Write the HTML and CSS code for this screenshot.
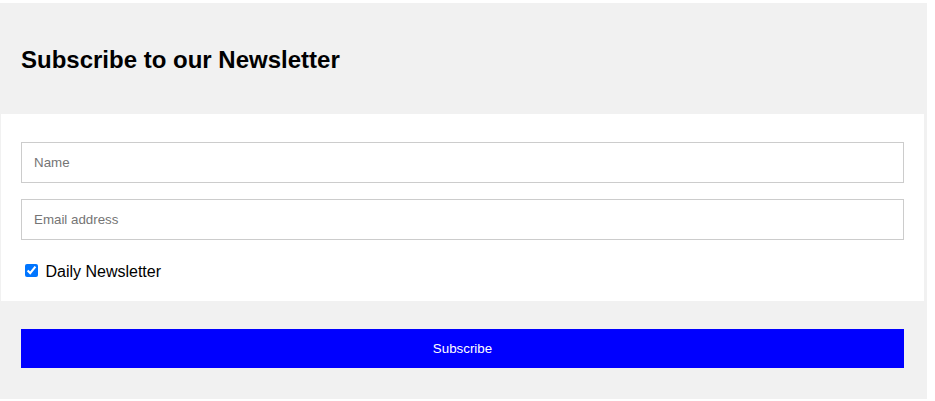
FILE: index.html
```html
<!DOCTYPE html>
<html lang="en">
<head>
    <meta charset="UTF-8">
    <meta name="viewport" content="width=device-width, initial-scale=1.0">
    <title>Newsletter</title>
    <link rel="stylesheet" href="styles.css">
</head>
<body>
    <form class="newsletter" action="#">
        <div class="container">
            <h2>Subscribe to our Newsletter</h2>
        </div>

        <div class="container fields">
            <input type="text" placeholder="Name" name="name">
            <input type="text" placeholder="Email address" name="mail">
            <label>
                <input type="checkbox" checked="checked" name="subscribe"> Daily Newsletter
            </label>
        </div>

        <div class="container">
            <input type="submit" value="Subscribe">
        </div>
    </form>
</body>
</html>
```

FILE: styles.css
```css
body {
    font-family: "Liberation Sans", Arial, Helvetica, sans-serif;
    margin: 3px 8px 0 0;
    background-color: #fff;
}

/* Border around the whole form */
.newsletter {
    border: 3px solid #f1f1f1;
    border-left-width: 1px;
}

/* Grey background for the top and bottom parts */
.container {
    padding: 20px;
    background-color: #f1f1f1;
}

.container h2 {
    margin: 20px 0;
    font-size: 24px;
}

.fields {
    background-color: #fff;
}

input[type=text], input[type=submit] {
    width: 100%;
    padding: 12px;
    margin: 8px 0;
    display: inline-block;
    border: 1px solid #ccc;
    box-sizing: border-box;
    font-family: "Liberation Sans", Arial, sans-serif;
    font-size: 13.333px;
}

input::placeholder {
    color: #757575;
}

input[type=checkbox] {
    margin-top: 16px;
}

input[type=submit] {
    background-color: #0000ff;
    color: #fff;
    border: none;
}
```
